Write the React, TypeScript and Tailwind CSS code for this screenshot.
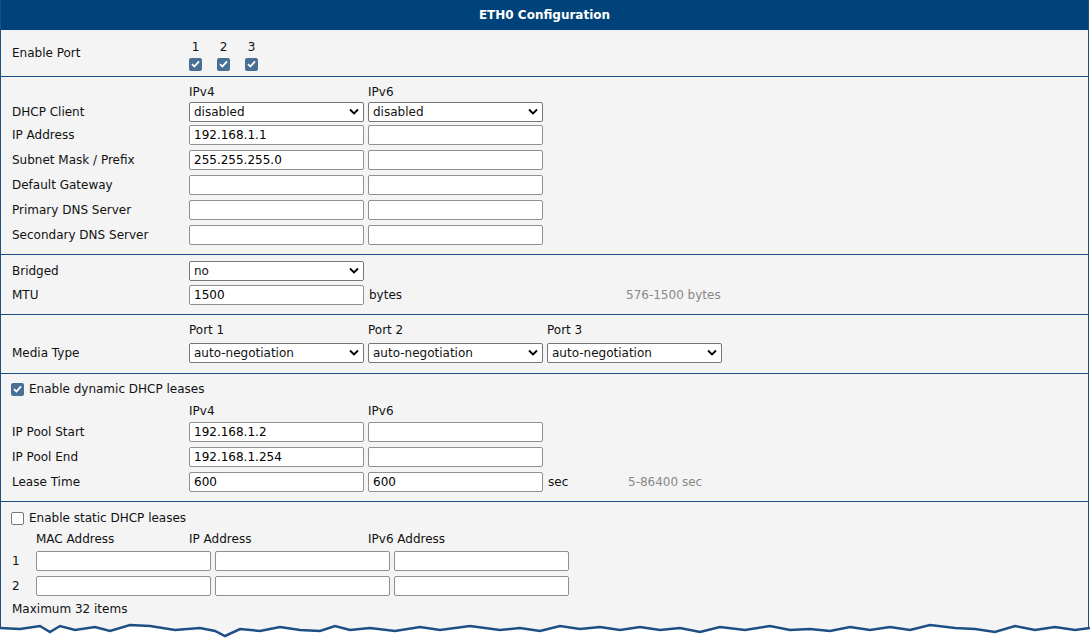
const F = { fontFamily: '"DejaVu Sans", Verdana, sans-serif' };

const inp = "h-[20px] w-[175px] border border-[#8f8f8f] rounded-[2px] bg-white px-[4px] text-[12px] text-black outline-none";

const Input = ({ v = "", w = "w-[175px]" }: { v?: string; w?: string }) => (
  <input readOnly value={v} className={`${inp} ${w}`} style={F} />
);

const Select = ({ v }: { v: string }) => (
  <div className="h-[20px] w-[175px] border border-[#767676] rounded-[2px] bg-white flex items-center justify-between px-[4px] text-[12px]">
    <span>{v}</span>
    <svg width="10" height="7" viewBox="0 0 10 7"><path d="M1 1.5 5 5.5 9 1.5" fill="none" stroke="#000" strokeWidth="1.8" /></svg>
  </div>
);

const Check = ({ on }: { on: boolean }) =>
  on ? (
    <span className="inline-flex h-[13px] w-[13px] rounded-[2px] bg-[#4a6f94] items-center justify-center">
      <svg width="9" height="8" viewBox="0 0 9 8"><path d="M1 4.2 3.4 6.5 8 1.3" fill="none" stroke="#fff" strokeWidth="1.8" /></svg>
    </span>
  ) : (
    <span className="inline-block h-[13px] w-[13px] rounded-[2px] border border-[#767676] bg-white" />
  );

const Row = ({ label, children, h = "h-[25px]" }: { label?: string; children?: React.ReactNode; h?: string }) => (
  <div className={`flex items-center ${h}`}>
    <div className="w-[177px] shrink-0">{label}</div>
    <div className="flex items-center gap-[4px]">{children}</div>
  </div>
);

const Head = ({ items }: { items: string[] }) => (
  <div className="flex items-end h-[20px] pl-[177px]">
    {items.map((t) => (
      <div key={t} className="w-[179px]">{t}</div>
    ))}
  </div>
);

const Sep = () => <div className="h-px bg-[#1d4f85]" />;

export default function App() {
  return (
    <div className="w-[1090px] h-[641px] bg-white text-[12px] text-[#111] relative" style={F}>
      <div className="mx-[0px] w-[1089px] border-x border-[#1d4f85] bg-[#f4f4f4] h-[632px]">
        <div className="h-[30px] bg-[#00427a] text-white font-bold flex items-center justify-center">ETH0 Configuration</div>
        <div className="pl-[11px]">
          <Row label="Enable Port" h="h-[46px]">
            <div className="flex gap-[15px] pt-[2px]">
              {["1", "2", "3"].map((n) => (
                <div key={n} className="flex flex-col items-center gap-[2px]">
                  <span>{n}</span>
                  <Check on />
                </div>
              ))}
            </div>
          </Row>
        </div>
        <Sep />
        <div className="pl-[11px] pt-[4px] pb-[7px]">
          <Head items={["IPv4", "IPv6"]} />
          <Row label="DHCP Client" h="h-[21px]"><Select v="disabled" /><Select v="disabled" /></Row>
          <Row label="IP Address"><Input v="192.168.1.1" /><Input /></Row>
          <Row label="Subnet Mask / Prefix"><Input v="255.255.255.0" /><Input /></Row>
          <Row label="Default Gateway"><Input /><Input /></Row>
          <Row label="Primary DNS Server"><Input /><Input /></Row>
          <Row label="Secondary DNS Server"><Input /><Input /></Row>
        </div>
        <Sep />
        <div className="pl-[11px] pt-[4px] pb-[7px]">
          <Row label="Bridged" h="h-[23px]"><Select v="no" /></Row>
          <Row label="MTU"><Input v="1500" /><span className="ml-[1px] w-[253px]">bytes</span><span className="text-[#888]">576-1500 bytes</span></Row>
        </div>
        <Sep />
        <div className="pl-[11px] pt-[4px] pb-[7px]">
          <Head items={["Port 1", "Port 2", "Port 3"]} />
          <Row label="Media Type" h="h-[27px]"><Select v="auto-negotiation" /><Select v="auto-negotiation" /><Select v="auto-negotiation" /></Row>
        </div>
        <Sep />
        <div className="pl-[10px] pt-[4px] pb-[7px]">
          <div className="flex items-center gap-[5px] h-[22px]"><Check on />Enable dynamic DHCP leases</div>
          <div className="pl-[1px]">
            <Head items={["IPv4", "IPv6"]} />
            <Row label="IP Pool Start" h="h-[24px]"><Input v="192.168.1.2" /><Input /></Row>
            <Row label="IP Pool End"><Input v="192.168.1.254" /><Input /></Row>
            <Row label="Lease Time"><Input v="600" /><Input v="600" /><span className="ml-[1px] w-[76px]">sec</span><span className="text-[#888]">5-86400 sec</span></Row>
          </div>
        </div>
        <Sep />
        <div className="pl-[10px] pt-[6px]">
          <div className="flex items-center gap-[5px] h-[20px]"><Check on={false} />Enable static DHCP leases</div>
          <div className="flex items-end h-[20px] pl-[25px]">
            <div className="w-[153px]">MAC Address</div>
            <div className="w-[179px]">IP Address</div>
            <div>IPv6 Address</div>
          </div>
          {["1", "2"].map((n) => (
            <div key={n} className="flex items-center h-[25px]">
              <span className="w-[25px] pl-[1px]">{n}</span>
              <div className="flex gap-[4px]"><Input w="w-[149px]" /><Input /><Input /></div>
            </div>
          ))}
          <div className="h-[22px] flex items-center pl-[1px]">Maximum 32 items</div>
        </div>
      </div>
      <svg className="absolute left-0 top-[618px]" width="1090" height="23" viewBox="0 0 1090 23">
        <path
          d="M0 16 L0 10 L20 11 L40 8 L50 14 L60 8 L75 12 L95 9 L110 13 L130 7 L150 8 L175 12 L200 10 L215 13 L225 18 L240 11 L260 13 L280 9 L300 12 L320 13 L335 8 L350 12 L370 10 L395 13 L420 9 L440 12 L470 8 L500 12 L520 10 L540 13 L560 8 L580 11 L600 9 L620 12 L640 9 L660 12 L680 10 L700 14 L720 9 L745 12 L770 8 L790 12 L810 11 L830 13 L850 9 L870 12 L890 9 L910 12 L930 7 L955 10 L975 11 L995 14 L1015 8 L1035 12 L1055 9 L1075 12 L1090 10 L1090 23 L0 23 Z"
          fill="#fff"
        />
        <path
          d="M0 10 L20 11 L40 8 L50 14 L60 8 L75 12 L95 9 L110 13 L130 7 L150 8 L175 12 L200 10 L215 13 L225 18 L240 11 L260 13 L280 9 L300 12 L320 13 L335 8 L350 12 L370 10 L395 13 L420 9 L440 12 L470 8 L500 12 L520 10 L540 13 L560 8 L580 11 L600 9 L620 12 L640 9 L660 12 L680 10 L700 14 L720 9 L745 12 L770 8 L790 12 L810 11 L830 13 L850 9 L870 12 L890 9 L910 12 L930 7 L955 10 L975 11 L995 14 L1015 8 L1035 12 L1055 9 L1075 12 L1090 10"
          fill="none"
          stroke="#1d4f85"
          strokeWidth="2.5"
        />
      </svg>
    </div>
  );
}
